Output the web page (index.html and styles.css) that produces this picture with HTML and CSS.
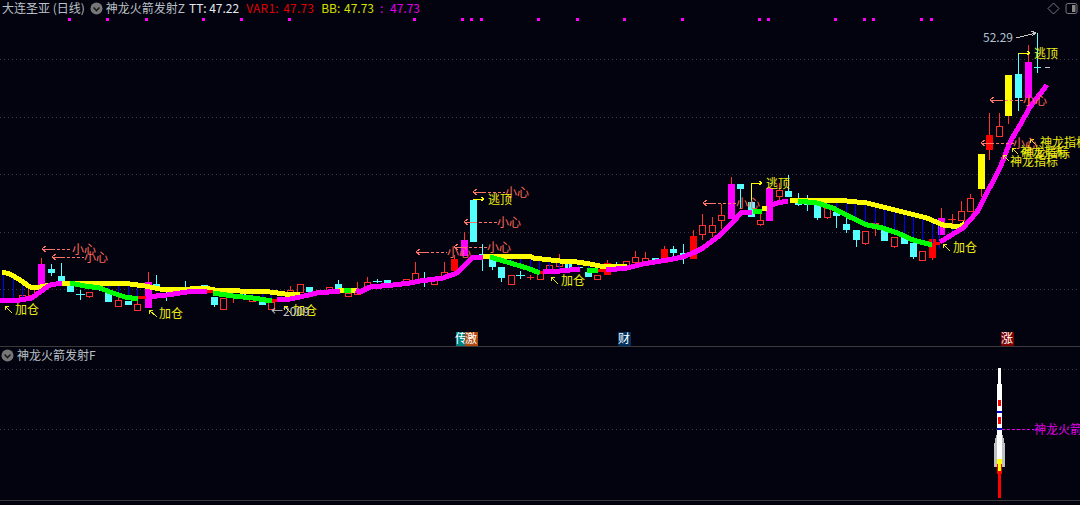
FILE: index.html
```html
<!DOCTYPE html>
<html lang="zh-CN">
<head>
<meta charset="utf-8">
<title>大连圣亚 (日线)</title>
<link rel="stylesheet" href="styles.css">
</head>
<body>
<main class="terminal">
  <section class="pane pane-price">
    <svg class="canvas" width="1080" height="346" viewBox="0 0 1080 346" aria-hidden="false">
      <path class="grid" d="M0 59.5H1080M0 117.5H1080M0 174.5H1080M0 232.5H1080M0 289.5H1080"/>
      <path class="dots" d="M68 18h3v3h-3zM106 18h3v3h-3zM145 18h3v3h-3zM202 18h3v3h-3zM240 18h3v3h-3zM288 18h3v3h-3zM413 18h3v3h-3zM461 18h3v3h-3zM470 18h3v3h-3zM480 18h3v3h-3zM537 18h3v3h-3zM576 18h3v3h-3zM623 18h3v3h-3zM681 18h3v3h-3zM758 18h3v3h-3zM767 18h3v3h-3zM834 18h3v3h-3zM863 18h3v3h-3zM872 18h3v3h-3zM920 18h3v3h-3zM930 18h3v3h-3z"/>

      <path class="wick-red" d="M89.5 296V298M118.5 297V300M137.5 299V304M233.5 296V303M290.5 286V290M357.5 282V291M367.5 277V282M415.5 262V273M444.5 262V272M559.5 254V262M635.5 251V257M645.5 252V258M702.5 214V225M702.5 234V240M712.5 217V225M712.5 232V237M721.5 204V215M721.5 220V229M760.5 213V220M760.5 224V226M779.5 183V190M779.5 196V202M827.5 217V219M865.5 243V245M875.5 228V236M894.5 246V248M961.5 201V211M970.5 194V198M999.5 113V126M41.5 258V264M148.5 272V282M464.5 232V240M731.5 177V184M941.5 208V218M1028.5 45V62M1028.5 98V107M981.5 189V197M1008.5 116V124M989.5 113V135M989.5 150V160M454.5 255V259M607.5 260V263M664.5 246V249M693.5 230V236M932.5 258V260M527 277.5H534M530.5 275V280M948 219.5H956M952.5 214V225"/>
      <path class="wick-grey" d="M1045 67.5H1050"/>
      <path class="body-hollow" d="M19.5 295.5h6v3h-6zM28.5 288.5h6v7h-6zM86.5 292.5h6v4h-6zM115.5 300.5h6v6h-6zM134.5 304.5h6v6h-6zM172.5 288.5h6v3h-6zM220.5 298.5h6v11h-6zM249.5 299.5h6v2h-6zM268.5 302.5h6v7h-6zM287.5 290.5h6v3h-6zM297.5 284.5h6v8h-6zM316.5 290.5h6v3h-6zM326.5 287.5h6v4h-6zM345.5 293.5h6v3h-6zM354.5 291.5h6v3h-6zM364.5 282.5h6v5h-6zM394.5 284.5h6v2h-6zM403.5 279.5h6v5h-6zM412.5 273.5h6v7h-6zM431.5 278.5h6v6h-6zM441.5 272.5h6v5h-6zM508.5 275.5h6v9h-6zM537.5 273.5h6v6h-6zM546.5 265.5h6v6h-6zM556.5 262.5h6v4h-6zM594.5 275.5h6v4h-6zM623.5 261.5h6v5h-6zM632.5 257.5h6v5h-6zM642.5 258.5h6v4h-6zM699.5 225.5h6v9h-6zM709.5 225.5h6v7h-6zM718.5 215.5h6v5h-6zM757.5 220.5h6v4h-6zM776.5 190.5h6v6h-6zM824.5 208.5h6v9h-6zM862.5 231.5h6v12h-6zM872.5 223.5h6v5h-6zM891.5 237.5h6v9h-6zM919.5 251.5h6v9h-6zM958.5 211.5h6v9h-6zM967.5 198.5h6v13h-6zM996.5 126.5h6v10h-6z"/>
      <path class="body-red" d="M451 259h7v12h-7zM604 263h7v12h-7zM661 249h7v14h-7zM690 236h7v23h-7zM929 239h7v19h-7zM986 135h7v15h-7z"/>
      <path class="body-magenta" d="M38 264h7v21h-7zM145 282h7v26h-7zM461 240h7v16h-7zM728 184h7v35h-7zM766 188h7v33h-7zM938 218h7v17h-7zM1025 62h7v36h-7z"/>
      <path class="body-yellow" d="M978 154h7v35h-7zM1005 75h7v41h-7z"/>
      <path class="wick-cyan" d="M51.5 264V276M61.5 263V276M156.5 275V284M185.5 281V287M214.5 305V307M338.5 280V284M424.5 272V287M482.5 244V271M492.5 267V270M501.5 278V282M616.5 262V266M673.5 246V256M683.5 244V264M740.5 189V209M751.5 183V202M788.5 175V191M798.5 193V206M807.5 195V211M817.5 200V220M836.5 198V228M846.5 218V233M856.5 240V247M913.5 257V259M1018.5 53V111M80.5 290V300M76 294.5H85M99.5 287V291M95 289.5H104M166.5 291V301M162 295.5H171M377.5 279V283M373 281.5H382M520.5 271V279M516 275.5H525M578.5 265V272M574 267.5H583M1037.5 33V73M1034 67.5H1041"/>
      <path class="body-cyan" d="M48 269h7v4h-7zM58 276h7v6h-7zM67 286h7v6h-7zM105 293h7v9h-7zM125 301h7v4h-7zM153 284h7v6h-7zM182 287h7v3h-7zM201 285h7v4h-7zM211 297h7v8h-7zM239 294h7v5h-7zM259 301h7v4h-7zM306 287h7v5h-7zM335 284h7v5h-7zM384 280h7v5h-7zM421 278h7v5h-7zM470 200h7v42h-7zM479 254h7v2h-7zM489 258h7v9h-7zM498 267h7v11h-7zM565 263h7v5h-7zM585 272h7v5h-7zM613 264h7v2h-7zM652 258h7v4h-7zM670 249h7v4h-7zM680 253h7v3h-7zM737 184h7v5h-7zM748 202h7v15h-7zM785 191h7v6h-7zM795 203h7v2h-7zM804 203h7v2h-7zM814 205h7v13h-7zM833 212h7v4h-7zM843 224h7v6h-7zM853 230h7v10h-7zM881 230h7v11h-7zM901 237h7v7h-7zM910 243h7v14h-7zM1015 74h7v24h-7z"/>

      <path class="wick-blue" d="M3.5 272V300M13.5 279V300M22.5 285V298M80.5 283V287M89.5 283V288M99.5 283V288M108.5 283V292M118.5 284V295M128.5 284V298M137.5 285V300M233.5 291V295M243.5 291V296M252.5 291V298M262.5 291V300M271.5 292V302M281.5 293V301M290.5 293V299M501.5 256V260M511.5 256V262M520.5 256V266M530.5 256V270M539.5 258V272M549.5 260V272M559.5 261V272M568.5 262V270M578.5 262V270M588.5 264V270M607.5 267V270M817.5 200V205M827.5 200V206M836.5 200V210M846.5 201V216M855.5 202V222M865.5 203V225M875.5 204V226M884.5 207V229M894.5 208V232M904.5 212V236M913.5 215V240M922.5 217V243M932.5 219V246M939.5 221V249M952.5 227V233"/>

      <polyline class="band band-yellow" points="2,272 10,274 20,280 30,287 40,287 50,285 62,283 100,283 130,284 145,286 160,289 190,289 205,288 215,290 240,291 270,292 285,294 300,294"/>
      <polyline class="band band-yellow" points="338,290 358,290"/>
      <polyline class="band band-yellow" points="483,256 530,256 533,258 560,261 577,262 590,264 600,266 627,267"/>
      <polyline class="band band-yellow" points="762,209 767,208"/>
      <polyline class="band band-yellow" points="790,200 827,200 847,201 867,203 883,207 907,213 927,218 943,225 960,227 965,223"/>

      <polyline class="band band-green" points="70,283 85,286 100,288 110,292 125,297 138,299"/>
      <polyline class="band band-green" points="213,293 233,296 253,298 272,301"/>
      <polyline class="band band-green" points="344,290 351,290"/>
      <polyline class="band band-green" points="490,257 507,262 527,268 540,273"/>
      <polyline class="band band-green" points="587,270 598,270"/>
      <polyline class="band band-green" points="753,211 762,211"/>
      <polyline class="band band-green" points="798,201 817,203 833,208 850,217 867,225 883,228 900,234 913,240 932,245"/>

      <polyline class="band band-red" points="138,298 146,297"/>
      <polyline class="band band-red" points="207,291 213,292"/>
      <polyline class="band band-red" points="272,301 278,300"/>
      <polyline class="band band-red" points="540,273 545,272"/>
      <polyline class="band band-red" points="598,270 606,270"/>
      <polyline class="band band-red" points="932,245 940,243"/>

      <polyline class="band band-magenta" points="0,300 20,300 32,298 40,292 50,285 62,283"/>
      <polyline class="band band-magenta" points="146,297 167,295 187,292 207,291"/>
      <polyline class="band band-magenta" points="277,300 290,299 300,297 317,293 340,291"/>
      <polyline class="band band-magenta" points="356,290 360,292 370,287 393,285 410,283 420,281 443,278 457,273 467,263 473,257 483,257"/>
      <polyline class="band band-magenta" points="543,272 560,271 580,269"/>
      <polyline class="band band-magenta" points="606,270 627,268 643,264 667,260 683,257 693,253 703,248 720,235 733,222 742,212 752,212"/>
      <polyline class="band band-magenta" points="768,207 777,203 788,201"/>
      <polyline class="band band-magenta" points="940,242 963,228 977,212 990,187 1000,168 1010,142 1020,125 1030,107 1047,85"/>

      <path class="lead-salmon" d="M52 249H72M62 257H84M483 192H505M474 222H497M464 247H487M426 252H447M713 203H737M1000 100H1023M991 143H1015"/>
      <path class="head-salmon" d="M46 246L42 249L46 252M42 249H52M56 254L52 257L56 260M52 257H62M477 189L473 192L477 195M473 192H483M468 219L464 222L468 225M464 222H474M458 244L454 247L458 250M454 247H464M420 249L416 252L420 255M416 252H426M707 200L703 203L707 206M703 203H713M994 97L990 100L994 103M990 100H1000M985 140L981 143L985 146M981 143H991"/>
      <path class="lead-yellow" d="M473 199H484M481 197L484 199L481 201M751 183H762M759 181L762 183L759 185M751 183V200M1018 53H1030M1027 51L1030 53L1027 55"/>
      <path class="lead-white" d="M1016 38L1036 33M1031 31L1036 33L1032 36"/>
      <path class="lead-upleft" d="M5 306L12 313M5 306h4M5 306v4M149 310L157 317M149 310h4M149 310v4M551 277L558 284M551 277h4M551 277v4M284 306L291 313M284 306h4M284 306v4M943 244L950 251M943 244h4M943 244v4M1030 139L1036 145M1030 139h4M1030 139v4M1012 148L1018 154M1012 148h4M1012 148v4M1003 155L1009 161M1003 155h4M1003 155v4"/>

      <text class="lbl salmon" x="72" y="254">小心</text>
      <text class="lbl salmon" x="84" y="262">小心</text>
      <text class="lbl salmon" x="505" y="197">小心</text>
      <text class="lbl salmon" x="497" y="227">小心</text>
      <text class="lbl salmon" x="487" y="252">小心</text>
      <text class="lbl salmon" x="447" y="257">小心</text>
      <text class="lbl salmon" x="736" y="208">小心</text>
      <text class="lbl salmon" x="1023" y="105">小心</text>
      <text class="lbl salmon" x="1013" y="148">小心</text>

      <text class="lbl yellow" x="488" y="204">逃顶</text>
      <text class="lbl yellow" x="766" y="188">逃顶</text>
      <text class="lbl yellow" x="1034" y="58">逃顶</text>

      <text class="lbl yellow" x="15" y="314">加仓</text>
      <text class="lbl yellow" x="159" y="318">加仓</text>
      <text class="lbl yellow" x="561" y="285">加仓</text>
      <text class="lbl yellow" x="293" y="315">加仓</text>
      <text class="lbl yellow" x="953" y="252">加仓</text>
      <text class="lbl grey" x="271" y="316">←2009</text>

      <text class="lbl yellow" x="1040" y="147">神龙指标</text>
      <text class="lbl yellow" x="1020" y="156">神龙指标</text>
      <text class="lbl yellow" x="1022" y="158">神龙指标</text>
      <text class="lbl yellow" x="1010" y="166">神龙指标</text>

      <text class="lbl price-tag" x="983" y="42">52.29</text>

      <rect class="tag-teal" x="456" y="332" width="10" height="14"/><text class="lbl tag-text" x="455" y="343">传</text>
      <rect class="tag-orange" x="465" y="332" width="13" height="14"/><text class="lbl tag-text" x="465" y="343">激</text>
      <rect class="tag-navy" x="618" y="332" width="13" height="14"/><text class="lbl tag-text" x="618" y="343">财</text>
      <rect class="tag-maroon" x="1001" y="332" width="13" height="14"/><text class="lbl tag-text" x="1001" y="343">涨</text>
    </svg>

    <header class="legend">
      <span class="title">大连圣亚 (日线)</span>
      <svg class="chevron" width="13" height="13" viewBox="0 0 13 13"><circle cx="6.5" cy="6.5" r="6"/><path d="M3.5 5.5L6.5 8.5L9.5 5.5"/></svg>
      <span class="title title-tight">神龙火箭发射Z</span>
      <span class="v-white">TT: 47.22</span>
      <span class="v-red">VAR1: 47.73</span>
      <span class="v-yellow">BB: 47.73</span>
      <span class="v-magenta">: 47.73</span>
      <span class="tools">
        <svg width="13" height="13" viewBox="0 0 13 13"><path class="tool-line" d="M6.5 1L12 6.5L6.5 12L1 6.5Z"/></svg>
        <svg width="13" height="13" viewBox="0 0 13 13"><rect class="tool-line" x="1" y="1.5" width="11" height="10" rx="2"/><rect class="tool-fill" x="7" y="3" width="3.5" height="7"/></svg>
      </span>
    </header>
  </section>

  <section class="pane pane-rocket">
    <svg class="canvas" width="1080" height="153" viewBox="0 0 1080 153">
      <path class="grid" d="M0 22.5H1080M0 82.5H1080"/>
      <path class="lead-magenta" d="M1002 82.5H1034"/>
      <g class="rocket">
        <rect class="r-white" x="998" y="21" width="3" height="16"/>
        <rect class="r-white" x="997" y="37" width="5" height="51"/>
        <rect class="r-red" x="998" y="53" width="3" height="6"/>
        <rect class="r-red" x="998" y="70" width="3" height="7"/>
        <rect class="r-blue" x="997" y="64" width="5" height="2"/>
        <rect class="r-blue" x="997" y="81" width="5" height="2"/>
        <rect class="r-grey" x="996" y="88" width="7" height="5"/>
        <rect class="r-grey" x="995" y="91" width="9" height="5"/>
        <rect class="r-grey" x="994" y="96" width="11" height="24"/>
        <rect class="r-white" x="997" y="88" width="5" height="31"/>
        <rect class="r-yellow" x="997" y="112" width="5" height="5"/>
        <rect class="r-red" x="997" y="117" width="5" height="10"/>
        <rect class="r-yellow" x="998" y="117" width="3" height="7"/>
        <rect class="r-red" x="998" y="127" width="3" height="24"/>
      </g>
      <text class="lbl magenta" x="1034" y="87">神龙火箭</text>
    </svg>
    <header class="legend legend-sub">
      <svg class="chevron" width="13" height="13" viewBox="0 0 13 13"><circle cx="6.5" cy="6.5" r="6"/><path d="M3.5 5.5L6.5 8.5L9.5 5.5"/></svg>
      <span class="title">神龙火箭发射F</span>
    </header>
  </section>

  <section class="pane pane-macd">
    <header class="legend legend-sub legend-clipped">
      <svg class="chevron" width="13" height="13" viewBox="0 0 13 13"><circle cx="6.5" cy="6.5" r="6"/><path d="M3.5 5.5L6.5 8.5L9.5 5.5"/></svg>
      <span class="title">MDL-TRIX(5,10)</span>
      <span class="v-white">MDIAN19: 0.1115</span>
      <span class="v-white">125000</span>
      <span class="v-yellow">A11.10: 126577</span>
    </header>
  </section>
</main>
</body>
</html>
```

FILE: styles.css
```css
html, body {
  margin: 0;
  height: 100%;
  background: #03030f;
}
body {
  overflow: hidden;
  font-family: "Noto Sans CJK SC", "Noto Sans", "Liberation Sans", sans-serif;
  font-size: 12px;
}
.terminal {
  display: flex;
  flex-direction: column;
  width: 1080px;
  height: 505px;
  overflow: hidden;
}
.pane {
  position: relative;
  flex: none;
  border-bottom: 1px solid #3a3a3a;
  box-sizing: content-box;
}
.pane-price { height: 346px; }
.pane-rocket { height: 153px; }
.pane-macd { height: 4px; border-bottom: 0; overflow: hidden; }

.canvas {
  position: absolute;
  left: 0;
  top: 0;
  display: block;
  shape-rendering: crispEdges;
}

.legend {
  position: relative;
  display: flex;
  align-items: center;
  gap: 5px;
  height: 14px;
  padding: 1px 2px 0;
  line-height: 14px;
  white-space: nowrap;
}
.legend-sub { gap: 3px; padding-left: 1px; }
.legend-sub .v-white, .legend-sub .v-yellow { margin-left: 2px; }
.legend-clipped { padding-top: 3px; }
.title { color: #b9c0c6; }
.title-tight { margin-left: -2px; margin-right: -1px; }
.v-white { color: #e4eaee; }
.v-red { color: #e00000; letter-spacing: 0.2px; word-spacing: 1.5px; margin-left: 2px; }
.v-yellow { color: #d6e000; word-spacing: 1px; margin-left: 2px; }
.v-magenta { color: #e000e8; word-spacing: 4px; margin-left: 1px; }
.chevron { flex: none; shape-rendering: auto; }
.chevron circle { fill: #777; }
.chevron path { fill: none; stroke: #1b1b1f; stroke-width: 1.6; }
.tools { display: flex; gap: 5px; margin-left: auto; }
.tools svg { display: block; }
.tool-line { fill: none; stroke: #777; stroke-width: 1; }
.tool-fill { fill: #888; }

.grid { fill: none; stroke: #3c3c44; stroke-width: 1; stroke-dasharray: 1 3; }
.dots { fill: #ff00ff; }

.wick-red { fill: none; stroke: #ff3030; stroke-width: 1; }
.wick-cyan { fill: none; stroke: #54ffff; stroke-width: 1; }
.wick-blue { fill: none; stroke: #0000ff; stroke-width: 1; }
.wick-grey { fill: none; stroke: #c8c8c8; stroke-width: 1; }
.body-hollow { fill: #03030f; stroke: #ff3030; stroke-width: 1; }
.body-red { fill: #ff0000; }
.body-magenta { fill: #ff00ff; }
.body-yellow { fill: #ffff00; }
.body-cyan { fill: #54ffff; }

.band { fill: none; stroke-width: 5; stroke-linejoin: bevel; }
.band-yellow { stroke: #ffff00; }
.band-green { stroke: #00ff00; }
.band-red { stroke: #ff0000; stroke-width: 3; }
.band-magenta { stroke: #ff00ff; }

.lead-salmon { fill: none; stroke: #ff7468; stroke-dasharray: 3 2; }
.head-salmon { fill: none; stroke: #ff7468; }
.lead-yellow { fill: none; stroke: #ffff00; }
.lead-white { fill: none; stroke: #c8c8c8; }
.lead-magenta { fill: none; stroke: #e000e8; stroke-dasharray: 3 2; }
.lead-upleft { fill: none; stroke: #ecec10; }

.lbl { font-family: "Noto Sans CJK SC", "Noto Sans", sans-serif; font-size: 12px; }
.salmon { fill: #ff6a5a; }
.yellow { fill: #ecec10; }
.grey { fill: #c4c4c4; }
.magenta { fill: #e000e8; }
.price-tag { fill: #b0c0cc; }
.tag-text { fill: #ffffff; }

.tag-teal { fill: #008080; }
.tag-orange { fill: #b04a10; }
.tag-navy { fill: #003060; }
.tag-maroon { fill: #800000; }

.r-white { fill: #ffffff; }
.r-red { fill: #ff0000; }
.r-blue { fill: #0000c8; }
.r-grey { fill: #c0c0c0; }
.r-yellow { fill: #ffff00; }
```
